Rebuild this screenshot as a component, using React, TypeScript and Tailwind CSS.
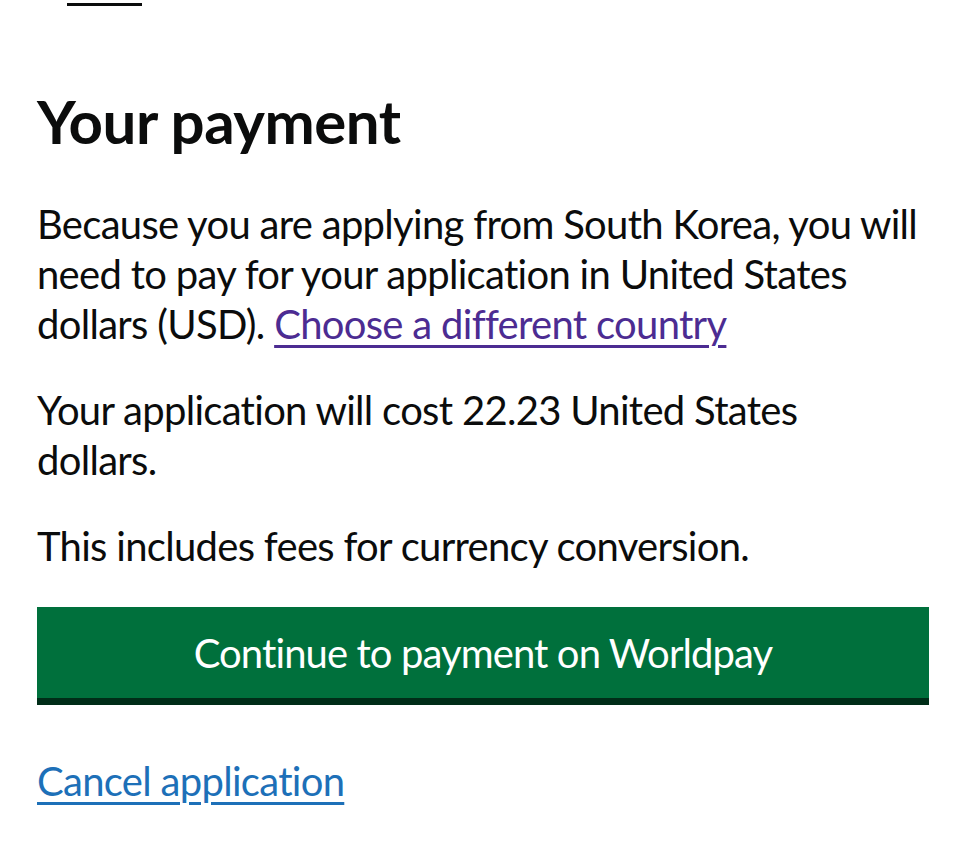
const font = 'font-["Lato","Liberation_Sans",Arial,sans-serif]'

export default function App() {
  return (
    <div className={`min-h-[859px] bg-white text-[#0b0c0c] ${font}`}>
      <div className="px-[37px]">
        <div className="ml-[30px] h-[6px] w-[75px] border-b-[3px] border-[#0b0c0c]" />

        <h1 className="mt-[78px] mb-[40px] text-[60px] font-bold leading-[75px] tracking-[-0.5px]">
          Your payment
        </h1>

        <div className="text-[40px] leading-[50px] tracking-[-0.7px]">
          <p className="mb-[36px] max-w-[884px]">
            Because you are applying from South Korea, you will need to pay for your application in
            United States dollars (USD).{' '}
            <a href="#" className="text-[#4c2c92] underline decoration-[3px] underline-offset-[6px]">
              Choose a different country
            </a>
          </p>

          <p className="mb-[36px] max-w-[884px]">
            Your application will cost 22.23 United States dollars.
          </p>

          <p className="mb-[36px] max-w-[884px]">This includes fees for currency conversion.</p>

          <button
            type="button"
            className="block h-[98px] w-full border-b-[7px] border-[#002d18] bg-[#00703c] leading-[50px] tracking-[-0.9px] text-white"
          >
            Continue to payment on Worldpay
          </button>

          <p className="mt-[51px]">
            <a href="#" className="text-[#1d70b8] underline decoration-[3px] underline-offset-[6px]">
              Cancel application
            </a>
          </p>
        </div>
      </div>
    </div>
  )
}
